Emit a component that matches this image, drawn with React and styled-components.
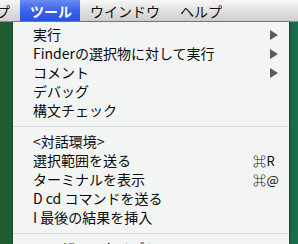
import React from 'react';
import styled, { createGlobalStyle } from 'styled-components';

const GlobalStyle = createGlobalStyle`
  html, body {
    margin: 0;
    padding: 0;
    overflow: hidden;
  }
  body {
    font-family: "Noto Sans CJK JP", "DejaVu Sans", sans-serif;
  }
`;

const Screen = styled.div`
  width: 298px;
  height: 244px;
  display: flex;
  flex-direction: column;
  overflow: hidden;
  background: linear-gradient(90deg, #1f5a2f 0%, #22603a 8%, #1d6a4c 100%);
`;

const MenuBar = styled.div`
  height: 22px;
  flex: none;
  display: flex;
  align-items: stretch;
  background: linear-gradient(#f6f6f6 0%, #e4e4e4 45%, #cfcfcf 100%);
  border-bottom: 1px solid #8a8a8a;
  box-sizing: border-box;
  font-size: 14px;
  color: #111;
`;

const BarItem = styled.div`
  display: flex;
  align-items: center;
  padding: 0 ${p => p.$pad || 10}px;
  width: ${p => (p.$width ? `${p.$width}px` : 'auto')};
  box-sizing: border-box;
  white-space: nowrap;
  overflow: hidden;
  justify-content: ${p => (p.$end ? 'flex-end' : 'flex-start')};
  color: ${p => (p.$active ? '#fff' : '#111')};
  background: ${p => (p.$active ? 'linear-gradient(#6a8cf5 0%, #3a62ea 50%, #2b52e2 100%)' : 'none')};
  font-weight: ${p => (p.$active ? 600 : 400)};
`;

const Desktop = styled.div`
  flex: 1;
  display: flex;
  padding-left: 13px;
  min-height: 0;
`;

const Dropdown = styled.div`
  width: 276px;
  flex: none;
  background: #f2f5f4;
  padding-top: 3px;
  box-shadow: 1px 0 2px rgba(0, 0, 0, 0.35), -1px 0 1px rgba(0, 0, 0, 0.15);
  font-size: 14px;
  color: #0a0a0a;
`;

const Row = styled.div`
  height: 19px;
  display: grid;
  grid-template-columns: 1fr 25px;
  align-items: center;
  padding: 0 11px 0 20px;
  line-height: 19px;
  white-space: nowrap;
`;

const Label = styled.span`
  overflow: hidden;
`;

const Shortcut = styled.span`
  font-size: 13px;
  letter-spacing: 0.5px;
`;

const Arrow = styled.svg`
  justify-self: end;
  width: 8px;
  height: 10px;
`;

const Separator = styled.div`
  height: 12px;
  display: flex;
  align-items: center;
  &::after {
    content: '';
    flex: 1;
    height: 1px;
    background: #d6d9d8;
  }
`;

const groups = [
  [
    { label: '実行', sub: true },
    { label: 'Finderの選択物に対して実行', sub: true },
    { label: 'コメント', sub: true },
    { label: 'デバッグ' },
    { label: '構文チェック' },
  ],
  [
    { label: '<対話環境>' },
    { label: '選択範囲を送る', key: '⌘R' },
    { label: 'ターミナルを表示', key: '⌘@' },
    { label: 'D cd コマンドを送る' },
    { label: 'I 最後の結果を挿入' },
  ],
  [{ label: 'ユーザースクリプト' }],
];

const SubArrow = () => (
  <Arrow viewBox="0 0 8 10">
    <polygon points="0,0 8,5 0,10" fill="#5c5c5c" />
  </Arrow>
);

export default function App() {
  return (
    <>
      <GlobalStyle />
      <Screen>
        <MenuBar>
          <BarItem $width={13} $pad={0} $end>プ</BarItem>
          <BarItem $active $width={60}>ツール</BarItem>
          <BarItem $pad={10}>ウインドウ</BarItem>
          <BarItem $pad={10}>ヘルプ</BarItem>
        </MenuBar>
        <Desktop>
          <Dropdown>
            {groups.map((items, gi) => (
              <React.Fragment key={gi}>
                {gi > 0 && <Separator />}
                {items.map(item => (
                  <Row key={item.label}>
                    <Label>{item.label}</Label>
                    {item.sub ? <SubArrow /> : <Shortcut>{item.key || ''}</Shortcut>}
                  </Row>
                ))}
              </React.Fragment>
            ))}
          </Dropdown>
        </Desktop>
      </Screen>
    </>
  );
}
